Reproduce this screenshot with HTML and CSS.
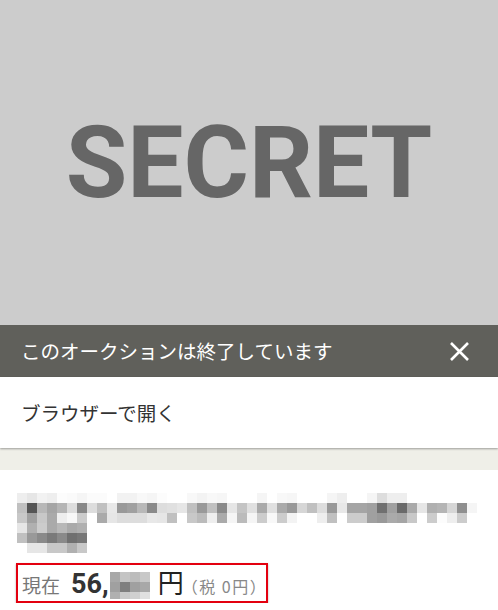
FILE: index.html
```html
<!DOCTYPE html>
<html lang="ja">
<head>
<meta charset="utf-8">
<title>オークション</title>
<link rel="stylesheet" href="styles.css">
</head>
<body>
<div class="hero"><span class="secret">SECRET</span></div>
<div class="bar">
  <span class="bar-text">このオークションは終了しています</span>
  <svg class="close" width="19" height="19" viewBox="0 0 19 19"><path d="M1 1L18 18M18 1L1 18"/></svg>
</div>
<div class="open">ブラウザーで開く</div>
<div class="gap"></div>
<div class="item">
  <svg class="title-mosaic" width="460" height="60" viewBox="0 0 460 60">
    <g>
      <rect x="0" fill="#eee"/><rect x="10" fill="#e6e6e6"/><rect x="20" fill="#f2f2f2"/><rect x="30" fill="#eee"/><rect x="40" fill="#fcfcfc"/><rect x="50" fill="#fafafa"/><rect x="60" fill="#f5f5f5"/><rect x="70" fill="#fbfbfb"/><rect x="80" fill="#fbfbfb"/><rect x="100" fill="#f2f2f2"/><rect x="110" fill="#f2f2f2"/><rect x="120" fill="#f8f8f8"/><rect x="130" fill="#f5f5f5"/><rect x="140" fill="#fcfcfc"/><rect x="170" fill="#f8f8f8"/><rect x="180" fill="#f3f3f3"/><rect x="190" fill="#f8f8f8"/><rect x="200" fill="#f6f6f6"/><rect x="240" fill="#f5f5f5"/><rect x="260" fill="#f8f8f8"/><rect x="270" fill="#f6f6f6"/><rect x="310" fill="#f5f5f5"/><rect x="320" fill="#eee"/><rect x="350" fill="#f5f5f5"/><rect x="360" fill="#ddd"/><rect x="370" fill="#eee"/><rect x="380" fill="#eee"/>
    </g>
    <g transform="translate(0,10)">
      <rect x="0" fill="#c0c0c0"/><rect x="10" fill="#555"/><rect x="20" fill="#b8b8b8"/><rect x="30" fill="#a5a5a5"/><rect x="40" fill="#b5b5b5"/><rect x="50" fill="#ddd"/><rect x="60" fill="#888"/><rect x="70" fill="#ddd"/><rect x="80" fill="#c0c0c0"/><rect x="90" fill="#e8e8e8"/><rect x="100" fill="#999"/><rect x="110" fill="#a0a0a0"/><rect x="120" fill="#b8b8b8"/><rect x="130" fill="#8a8a8a"/><rect x="140" fill="#ddd"/><rect x="150" fill="#e0e0e0"/><rect x="160" fill="#e6e6e6"/><rect x="170" fill="#c0c0c0"/><rect x="180" fill="#999"/><rect x="190" fill="#c0c0c0"/><rect x="200" fill="#8a8a8a"/><rect x="210" fill="#e6e6e6"/><rect x="220" fill="#c4c4c4"/><rect x="230" fill="#e0e0e0"/><rect x="240" fill="#aaa"/><rect x="250" fill="#e0e0e0"/><rect x="260" fill="#aaa"/><rect x="270" fill="#999"/><rect x="280" fill="#d6d6d6"/><rect x="290" fill="#c0c0c0"/><rect x="300" fill="#ddd"/><rect x="310" fill="#999"/><rect x="320" fill="#e8e8e8"/><rect x="330" fill="#a5a5a5"/><rect x="340" fill="#a5a5a5"/><rect x="350" fill="#a0a0a0"/><rect x="360" fill="#707070"/><rect x="370" fill="#a0a0a0"/><rect x="380" fill="#6a6a6a"/><rect x="390" fill="#aaa"/><rect x="400" fill="#e6e6e6"/><rect x="410" fill="#b0b0b0"/><rect x="420" fill="#b5b5b5"/><rect x="430" fill="#d6d6d6"/><rect x="440" fill="#8f8f8f"/><rect x="450" fill="#f5f5f5"/>
    </g>
    <g transform="translate(0,20)">
      <rect x="0" fill="#c8c8c8"/><rect x="10" fill="#a0a0a0"/><rect x="20" fill="#c8c8c8"/><rect x="30" fill="#aaa"/><rect x="40" fill="#eee"/><rect x="50" fill="#f8f8f8"/><rect x="60" fill="#ccc"/><rect x="80" fill="#aaa"/><rect x="90" fill="#e6e6e6"/><rect x="100" fill="#ddd"/><rect x="110" fill="#ddd"/><rect x="120" fill="#ddd"/><rect x="130" fill="#e8e8e8"/><rect x="140" fill="#e6e6e6"/><rect x="150" fill="#c0c0c0"/><rect x="170" fill="#c8c8c8"/><rect x="180" fill="#bbb"/><rect x="190" fill="#eee"/><rect x="200" fill="#aaa"/><rect x="210" fill="#f5f5f5"/><rect x="220" fill="#bbb"/><rect x="230" fill="#f5f5f5"/><rect x="240" fill="#ccc"/><rect x="250" fill="#f8f8f8"/><rect x="260" fill="#ccc"/><rect x="270" fill="#f3f3f3"/><rect x="300" fill="#eee"/><rect x="310" fill="#c0c0c0"/><rect x="330" fill="#ccc"/><rect x="340" fill="#ccc"/><rect x="350" fill="#a0a0a0"/><rect x="360" fill="#999"/><rect x="370" fill="#aaa"/><rect x="380" fill="#a5a5a5"/><rect x="390" fill="#c8c8c8"/><rect x="410" fill="#ccc"/><rect x="420" fill="#fcfcfc"/><rect x="430" fill="#eee"/><rect x="440" fill="#ccc"/>
    </g>
    <g transform="translate(0,30)">
      <rect x="0" fill="#e6e6e6"/><rect x="10" fill="#b0b0b0"/><rect x="20" fill="#ccc"/><rect x="30" fill="#aaa"/><rect x="40" fill="#b8b8b8"/><rect x="50" fill="#aaa"/><rect x="60" fill="#b0b0b0"/>
    </g>
    <g transform="translate(0,40)">
      <rect x="0" fill="#c0c0c0"/><rect x="10" fill="#999"/><rect x="20" fill="#8a8a8a"/><rect x="30" fill="#7a7a7a"/><rect x="40" fill="#8a8a8a"/><rect x="50" fill="#707070"/><rect x="60" fill="#777"/>
    </g>
    <g transform="translate(0,50)">
      <rect x="10" fill="#e6e6e6"/><rect x="20" fill="#e6e6e6"/><rect x="30" fill="#c8c8c8"/><rect x="40" fill="#c8c8c8"/><rect x="50" fill="#b0b0b0"/><rect x="60" fill="#c8c8c8"/>
    </g>
  </svg>
  <div class="price">
    <span class="label">現在</span>
    <span class="num">56,</span>
    <svg class="price-mosaic" width="40" height="27" viewBox="0 0 40 27">
      <g>
        <rect x="0" fill="#a8a8a8"/><rect x="10" fill="#c4c4c4"/><rect x="20" fill="#bcbcbc"/><rect x="30" fill="#c8c8c8"/>
      </g>
      <g transform="translate(0,10)">
        <rect x="0" fill="#a0a0a0"/><rect x="10" fill="#7f7f7f"/><rect x="20" fill="#a0a0a0"/><rect x="30" fill="#a8a8a8"/>
      </g>
      <g transform="translate(0,20)">
        <rect x="0" fill="#b0b0b0"/><rect x="10" fill="#cacaca"/><rect x="20" fill="#d0d0d0"/><rect x="30" fill="#e0e0e0"/>
      </g>
    </svg>
    <span class="yen">円</span>
    <span class="tax">（税 0円）</span>
  </div>
</div>
</body>
</html>
```

FILE: styles.css
```css
html, body {
  margin: 0;
  padding: 0;
  background: #ffffff;
}
body {
  font-family: Roboto, "Noto Sans CJK JP", sans-serif;
  width: 498px;
}
.hero {
  height: 325px;
  background: #cccccc;
  display: flex;
  align-items: center;
  justify-content: center;
}
.secret {
  font-family: Roboto, sans-serif;
  font-weight: 700;
  font-size: 100px;
  line-height: 1;
  color: #666666;
}
.bar {
  height: 52px;
  background: #60605b;
  display: flex;
  align-items: center;
  justify-content: space-between;
  padding: 0 29px 0 21px;
}
.bar-text {
  font-family: "Noto Sans CJK JP", sans-serif;
  font-size: 19.5px;
  color: #ffffff;
  line-height: 1;
}
.close path {
  stroke: #ffffff;
  stroke-width: 2.6;
  fill: none;
}
.open {
  position: relative;
  height: 71px;
  background: #ffffff;
  display: flex;
  align-items: center;
  padding-left: 21px;
  font-family: "Noto Sans CJK JP", sans-serif;
  font-size: 19.5px;
  color: #333333;
  box-shadow: 0 1px 2px rgba(0, 0, 0, 0.35);
}
.gap {
  height: 22px;
  background: #efefe8;
}
.item {
  padding: 23px 0 0 17px;
}
.title-mosaic {
  display: block;
}
.title-mosaic rect, .price-mosaic rect {
  width: 10px;
  height: 10px;
}
.price {
  margin: 10px 0 0 -1px;
  display: inline-flex;
  align-items: baseline;
  height: 40px;
  box-sizing: border-box;
  border: 2px solid #e3000f;
  box-shadow: 0 1px 2px rgba(0, 0, 0, 0.3);
  padding: 4px 0 0 4px;
  line-height: 1;
  font-family: Roboto, "Noto Sans CJK JP", sans-serif;
}
.label {
  font-family: "Noto Sans CJK JP", sans-serif;
  font-size: 19px;
  color: #777777;
}
.num {
  margin-left: 11px;
  font-size: 27px;
  font-weight: 700;
  color: #333333;
}
.price-mosaic {
  align-self: center;
  margin-left: 1px;
}
.yen {
  margin-left: 8px;
  font-family: "Noto Sans CJK JP", sans-serif;
  font-size: 26px;
  color: #222222;
}
.tax {
  margin: 0 -1px 0 -2px;
  font-family: "Noto Sans CJK JP", sans-serif;
  font-size: 16px;
  letter-spacing: 1.5px;
  color: #888888;
}
```
